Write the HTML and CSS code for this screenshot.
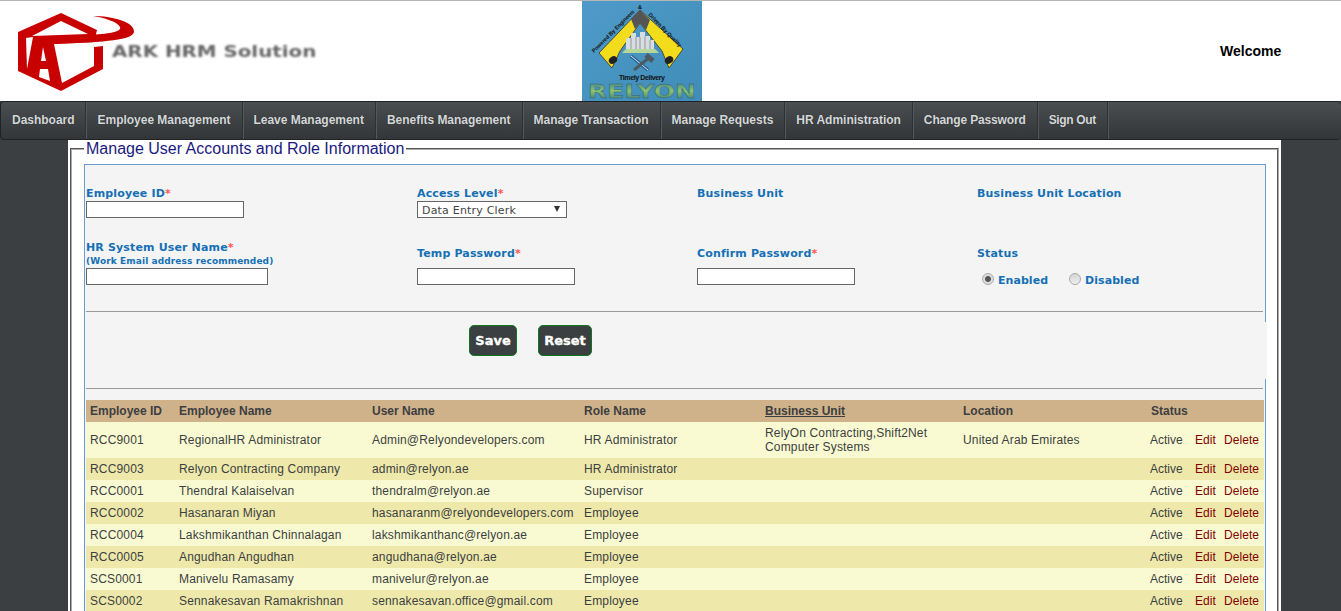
FILE: index.html
```html
<!DOCTYPE html>
<html lang="en">

<head>
  <meta charset="UTF-8">
  <title>Manage User Accounts</title>
  <link rel="stylesheet" href="styles.css">
</head>

<body>
  <div class="header">
    <div class="ark-logo">
      <svg class="ark-mark" width="140" height="100" viewBox="0 0 140 100">
        <path fill="#c80000" d="M61 12 L18 31 V70 L61 90 L103 68 V45 L94 46 V41 L97 29 Z" />
        <path fill="#fff" d="M61 20 L32 35 L88 33 Z" />
        <path fill="#fff" d="M26 37 L33 36 L27 68 Z" />
        <path fill="#fff" d="M54 43 L94 41 V65 L62 82 Z" />
        <path fill="#fff" d="M43 46 L46 60 L41 60 Z" />
        <path fill="#fff" d="M40 68 L48 68 L50 80 L39 76 Z" />
        <path fill="#c80000" d="M93 15 C112 15 135 21 134 31 C132 39 108 41 54 43 L34 43 L33 36 L88 34 C108 33 122 31 120 26 C118 21 105 17 93 15 Z" />
      </svg>
      <span class="ark-name">ARK HRM Solution</span>
    </div>
    <svg class="relyon-logo" width="120" height="100" viewBox="0 0 120 100">
      <defs>
        <linearGradient id="relyonBg" x1="0" y1="0" x2="1" y2="1">
          <stop offset="0" stop-color="#4f9ac9" />
          <stop offset="1" stop-color="#3f8db8" />
        </linearGradient>
        <linearGradient id="relyonText" x1="0" y1="0" x2="0" y2="1">
          <stop offset="0" stop-color="#2f6f9c" />
          <stop offset="0.5" stop-color="#8cc46a" />
          <stop offset="1" stop-color="#24628c" />
        </linearGradient>
        <path id="arcLeft" d="M12 52 L54 10" />
        <path id="arcRight" d="M66 14 L98 47" />
      </defs>
      <rect width="120" height="100" fill="url(#relyonBg)" />
      <path fill="#f3dc1c" stroke="#222" stroke-width="0.7" d="M58 9 L17 52 L30 67 L38 50 L58 22 L80 50 L87 67 L101 48 Z" />
      <path fill="#555" d="M58 9 L49 18 L53 28 L58 22 L64 29 L68 19 Z" />
      <ellipse cx="31" cy="59" rx="4.5" ry="3.5" fill="#222" transform="rotate(-35 31 59)" />
      <ellipse cx="87" cy="59" rx="4.5" ry="3.5" fill="#222" transform="rotate(-35 87 59)" />
      <path fill="#b7d79a" d="M40 52 L44 48 H73 L77 52 Z" />
      <path fill="#d8dde0" d="M44 48 V37 H49 V32 H54 V36 H58 V31 H63 V35 H68 V39 H72 V48 Z" />
      <path stroke="#8f999f" stroke-width="1" fill="none" d="M49 37 V48 M54 36 V48 M58 36 V48 M63 35 V48 M68 39 V48" />
      <path stroke="#2a5f94" stroke-width="3.5" fill="none" d="M49 55 L66 69" />
      <path stroke="#dfe8ec" stroke-width="1" fill="none" d="M49 55 L66 69" />
      <path stroke="#4c5a62" stroke-width="3" fill="none" d="M68 56 L52 69" />
      <path stroke="#4c5a62" stroke-width="5" fill="none" d="M64 54 L71 60" />
      <text class="relyon-arc"><textPath href="#arcLeft" textLength="58">Powered By Engineers</textPath></text>
      <text class="relyon-arc"><textPath href="#arcRight" textLength="45">Driven By Quality</textPath></text>
      <text class="relyon-arc" x="56" y="8">&amp;</text>
      <text class="relyon-timely" x="60" y="79" text-anchor="middle" textLength="46">Timely Delivery</text>
      <text class="relyon-name" x="6" y="97" textLength="108" lengthAdjust="spacingAndGlyphs" fill="url(#relyonText)">RELYON</text>
    </svg>
    <div class="welcome">Welcome</div>
  </div>

  <div class="nav">
    <a class="nav-item nav-first">Dashboard</a>
    <a class="nav-item nav-second">Employee Management</a>
    <a class="nav-item">Leave Management</a>
    <a class="nav-item">Benefits Management</a>
    <a class="nav-item">Manage Transaction</a>
    <a class="nav-item">Manage Requests</a>
    <a class="nav-item">HR Administration</a>
    <a class="nav-item nav-tight">Change Password</a>
    <a class="nav-item nav-last">Sign Out</a>
  </div>

  <div class="main">
    <fieldset class="panel">
      <legend class="panel-title">Manage User Accounts and Role Information</legend>
      <div class="box">
        <div class="form-grid">
          <div class="field">
            <label class="lbl">Employee ID<span class="req">*</span></label>
            <input class="txt w158" type="text">
          </div>
          <div class="field">
            <label class="lbl">Access Level<span class="req">*</span></label>
            <div class="select">Data Entry Clerk<span class="select-arrow"></span></div>
          </div>
          <div class="field field-top">
            <label class="lbl">Business Unit</label>
          </div>
          <div class="field field-top">
            <label class="lbl">Business Unit Location</label>
          </div>

          <div class="field">
            <label class="lbl">HR System User Name<span class="req">*</span></label>
            <div class="lbl-note">(Work Email address recommended)</div>
            <input class="txt w182" type="text">
          </div>
          <div class="field">
            <label class="lbl">Temp Password<span class="req">*</span></label>
            <input class="txt w158 gap-input" type="text">
          </div>
          <div class="field">
            <label class="lbl">Confirm Password<span class="req">*</span></label>
            <input class="txt w158 gap-input" type="text">
          </div>
          <div class="field">
            <label class="lbl">Status</label>
            <div class="radios">
              <span class="radio radio-on"></span><span class="lbl radio-text">Enabled</span>
              <span class="radio radio-off"></span><span class="lbl">Disabled</span>
            </div>
          </div>
        </div>

        <hr class="rule rule-first">
        <div class="buttons">
          <button class="btn btn-save" type="button">Save</button>
          <button class="btn btn-reset" type="button">Reset</button>
        </div>
        <hr class="rule">

        <table class="users">
          <colgroup>
            <col class="c-id"><col class="c-name"><col class="c-user"><col class="c-role"><col class="c-bu"><col class="c-loc"><col class="c-status"><col class="c-edit"><col class="c-del">
          </colgroup>
          <thead>
            <tr>
              <th>Employee ID</th>
              <th>Employee Name</th>
              <th>User Name</th>
              <th>Role Name</th>
              <th><a class="sort">Business Unit</a></th>
              <th>Location</th>
              <th colspan="3">Status</th>
            </tr>
          </thead>
          <tbody>
            <tr class="tall">
              <td>RCC9001</td><td>RegionalHR Administrator</td><td>Admin@Relyondevelopers.com</td><td>HR Administrator</td>
              <td>RelyOn Contracting,Shift2Net Computer Systems</td><td>United Arab Emirates</td>
              <td class="st">Active</td><td class="act">Edit</td><td class="act">Delete</td>
            </tr>
            <tr>
              <td>RCC9003</td><td>Relyon Contracting Company</td><td>admin@relyon.ae</td><td>HR Administrator</td>
              <td></td><td></td>
              <td class="st">Active</td><td class="act">Edit</td><td class="act">Delete</td>
            </tr>
            <tr>
              <td>RCC0001</td><td>Thendral Kalaiselvan</td><td>thendralm@relyon.ae</td><td>Supervisor</td>
              <td></td><td></td>
              <td class="st">Active</td><td class="act">Edit</td><td class="act">Delete</td>
            </tr>
            <tr>
              <td>RCC0002</td><td>Hasanaran Miyan</td><td>hasanaranm@relyondevelopers.com</td><td>Employee</td>
              <td></td><td></td>
              <td class="st">Active</td><td class="act">Edit</td><td class="act">Delete</td>
            </tr>
            <tr>
              <td>RCC0004</td><td>Lakshmikanthan Chinnalagan</td><td>lakshmikanthanc@relyon.ae</td><td>Employee</td>
              <td></td><td></td>
              <td class="st">Active</td><td class="act">Edit</td><td class="act">Delete</td>
            </tr>
            <tr>
              <td>RCC0005</td><td>Angudhan Angudhan</td><td>angudhana@relyon.ae</td><td>Employee</td>
              <td></td><td></td>
              <td class="st">Active</td><td class="act">Edit</td><td class="act">Delete</td>
            </tr>
            <tr>
              <td>SCS0001</td><td>Manivelu Ramasamy</td><td>manivelur@relyon.ae</td><td>Employee</td>
              <td></td><td></td>
              <td class="st">Active</td><td class="act">Edit</td><td class="act">Delete</td>
            </tr>
            <tr>
              <td>SCS0002</td><td>Sennakesavan Ramakrishnan</td><td>sennakesavan.office@gmail.com</td><td>Employee</td>
              <td></td><td></td>
              <td class="st">Active</td><td class="act">Edit</td><td class="act">Delete</td>
            </tr>
          </tbody>
        </table>
      </div>
    </fieldset>
  </div>
</body>

</html>
```

FILE: styles.css
```css
html, body {
  margin: 0;
  height: 611px;
  overflow: hidden;
}

body {
  background: #3c3f41;
  font-family: "Liberation Sans", Arial, sans-serif;
  font-size: 12px;
  color: #3c3f41;
}

.header {
  display: flex;
  align-items: center;
  height: 100px;
  background: #fff;
  border-top: 1px solid #b5b5b5;
}

.ark-logo {
  position: relative;
  width: 582px;
  height: 100px;
}

.ark-mark {
  display: block;
  filter: blur(0.3px);
}

.ark-name {
  position: absolute;
  left: 112px;
  top: 41px;
  font-family: "DejaVu Sans", sans-serif;
  font-weight: bold;
  font-size: 16px;
  line-height: 20px;
  color: #666;
  white-space: nowrap;
  transform: scaleX(1.24);
  transform-origin: left center;
  filter: blur(0.8px);
}

.relyon-logo {
  display: block;
  flex: none;
  overflow: visible;
}

.relyon-arc {
  font: bold 5.5px "Liberation Sans", sans-serif;
  fill: #111;
}

.relyon-timely {
  font: bold 7px "Liberation Sans", sans-serif;
  fill: #111;
}

.relyon-name {
  font: bold 20px "DejaVu Sans", sans-serif;
  stroke: #2a5f7c;
  stroke-width: 0.4px;
}

.welcome {
  margin-left: 518px;
  font-size: 14px;
  font-weight: bold;
  color: #000;
}

.nav {
  display: flex;
  height: 37px;
  padding-left: 1px;
  background: linear-gradient(#4b4e50, #333638);
  border: 1px solid #222;
  border-right: 0;
  border-radius: 4px;
}

.nav-item {
  padding: 0 11px;
  line-height: 37px;
  font-weight: bold;
  color: #d4d8da;
  letter-spacing: -0.02px;
  text-shadow: 0 0 1px #222;
  border-right: 1px solid #2e3032;
  box-shadow: 1px 0 0 #55585a;
  white-space: nowrap;
}

.nav-first {
  padding: 0 10px;
}

.nav-second {
  padding-left: 12px;
}

.nav-tight {
  letter-spacing: -0.15px;
}

.nav-last {
  letter-spacing: -0.35px;
}

.main {
  margin: 0 60px 0 68px;
  padding: 0 2px;
  height: 471px;
  background: #fff;
}

.panel {
  margin: 0;
  padding: 6px 11px 0 12px;
  width: 1209px;
  box-sizing: border-box;
  border: 2px groove #aaa;
  border-bottom: 0;
}

.panel-title {
  padding: 0 2px;
  margin-left: 0;
  font-size: 16px;
  line-height: 18px;
  color: #1a1a80;
}

.box {
  border: 1px solid #6c9bd2;
  background: #f4f4f4;
  padding-left: 1px;
  padding-top: 21px;
}

.form-grid {
  display: grid;
  grid-template-columns: 331px 280px 280px 1fr;
  grid-template-rows: 32px 67px;
  align-items: end;
}

.field-top {
  align-self: start;
  margin-top: 1px;
}

.lbl {
  font-family: "DejaVu Sans", sans-serif;
  font-size: 11px;
  font-weight: bold;
  color: #1570b5;
  line-height: 14px;
  letter-spacing: 0.15px;
  display: block;
}

.req {
  color: #f55;
}

.lbl-note {
  font-family: "DejaVu Sans", sans-serif;
  font-size: 9px;
  font-weight: bold;
  color: #1570b5;
  line-height: 13px;
  letter-spacing: 0.1px;
}

.txt {
  display: block;
  box-sizing: border-box;
  height: 17px;
  margin: 0;
  padding: 0 2px;
  border: 1px solid #666;
  background: #fff;
}

.w158 {
  width: 158px;
}

.w182 {
  width: 182px;
}

.gap-input {
  margin-top: 7px;
}

.select {
  position: relative;
  box-sizing: border-box;
  width: 150px;
  height: 17px;
  padding-left: 4px;
  border: 1px solid #666;
  background: #fff;
  font-family: "DejaVu Sans", sans-serif;
  font-size: 11px;
  line-height: 17px;
  letter-spacing: 0.2px;
  color: #444;
}

.select-arrow {
  position: absolute;
  right: 6px;
  top: 4px;
  border-style: solid;
  border-width: 6px 3.5px 0;
  border-color: #333 transparent transparent;
}

.radios {
  display: flex;
  align-items: center;
  height: 19px;
  margin-top: 10px;
  margin-bottom: -5px;
  padding-left: 5px;
}

.radios .lbl {
  letter-spacing: 0.05px;
}

.radio {
  box-sizing: border-box;
  width: 12px;
  height: 12px;
  margin-top: -4px;
  margin-right: 4px;
  border: 1px solid #aaa;
  border-radius: 50%;
  background: linear-gradient(#d4d4d4, #efefef);
}

.radio-on {
  background: radial-gradient(circle, #555 0 2.5px, #ddd 3.5px);
}

.radio-text {
  margin-right: 21px;
}

.rule {
  height: 0;
  margin: 0 2px 0 0;
  border: 0;
  border-top: 1px solid #999;
}

.rule-first {
  margin-top: 26px;
}

.buttons {
  position: relative;
  display: flex;
  gap: 21px;
  height: 57px;
  margin: 10px -2px 9px -1px;
  padding: 3px 0 0 384px;
  box-sizing: border-box;
  background: #f4f4f4;
}

.btn {
  height: 31px;
  padding: 0;
  border: 1px solid #0b7a1a;
  border-radius: 5px;
  background: #3c3f41;
  color: #fff;
  font-family: "DejaVu Sans", sans-serif;
  font-size: 13px;
  font-weight: bold;
  -webkit-text-stroke: 0.3px #fff;
}

.btn-save {
  width: 48px;
}

.btn-reset {
  width: 54px;
}

.users {
  table-layout: fixed;
  width: 1178px;
  margin-top: 11px;
  border-collapse: collapse;
  font-size: 12px;
}

.c-id { width: 89px; }
.c-name { width: 193px; }
.c-user { width: 212px; }
.c-role { width: 181px; }
.c-bu { width: 198px; }
.c-loc { width: 188px; }
.c-status { width: 44px; }
.c-edit { width: 29px; }
.c-del { width: 44px; }

.users th {
  height: 22px;
  padding: 0 4px;
  background: #d0b28a;
  text-align: left;
  color: #3c3f41;
}

.sort {
  text-decoration: underline;
}

.users td {
  height: 22px;
  padding: 0 4px;
  line-height: 14px;
  letter-spacing: 0.17px;
  color: #3c3f41;
}

.users tbody tr:nth-child(odd) {
  background: #fafad2;
}

.users tbody tr:nth-child(even) {
  background: #eee8aa;
}

.users .tall td {
  height: 36px;
}

.users .st {
  padding-left: 3px;
  letter-spacing: 0;
}

.users .act {
  color: #800000;
  letter-spacing: 0.05px;
}
```
